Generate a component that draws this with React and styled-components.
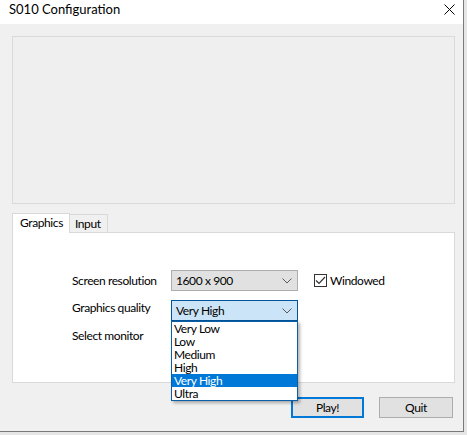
import styled, { createGlobalStyle } from "styled-components";

const Global = createGlobalStyle`
  body {
    margin: 0;
    background: #e6e6e6;
    font-family: Lato, "Noto Sans", sans-serif;
  }
`;

const Window = styled.div`
  width: 463px;
  height: 431px;
  border-right: 1px solid #7a7a7a;
  border-bottom: 1px solid #7a7a7a;
  background: #f0f0f0;
  display: flex;
  flex-direction: column;
  letter-spacing: -0.4px;
`;

const TitleBar = styled.div`
  height: 24px;
  background: #fff;
  display: flex;
  align-items: flex-start;
  justify-content: space-between;
  padding: 0 8px 0 9px;
`;

const Title = styled.span`
  font-size: 13px;
  line-height: 19px;
  letter-spacing: 0;
  color: #000;
`;

const Close = styled.svg`
  margin-top: 4px;
`;

const Body = styled.div`
  flex: 1;
  display: flex;
  flex-direction: column;
  padding: 12px 8px 0 12px;
`;

const Preview = styled.div`
  height: 166px;
  border: 1px solid #dadada;
  background: #efefef;
`;

const TabStrip = styled.div`
  display: flex;
  align-items: flex-end;
  height: 20px;
  margin-top: 8px;
`;

const Tab = styled.div`
  height: ${(p) => (p.$active ? 20 : 18)}px;
  padding: ${(p) => (p.$active ? "0 6px 0 7px" : "0 6px 0 5px")};
  box-sizing: border-box;
  border: 1px solid #d9d9d9;
  border-bottom: none;
  background: ${(p) => (p.$active ? "#fff" : "#f0f0f0")};
  font-size: 12px;
  line-height: 18px;
  color: #000;
  position: relative;
  z-index: ${(p) => (p.$active ? 1 : 0)};
  margin-bottom: ${(p) => (p.$active ? -1 : 0)}px;
  ${(p) => (p.$active ? "" : "border-left: none;")}
`;

const Panel = styled.div`
  border: 1px solid #d9d9d9;
  background: #fff;
  padding: 37px 0 0 59px;
  box-sizing: border-box;
  height: 151px;
  display: grid;
  grid-template-columns: 99px 127px auto;
  grid-auto-rows: 21px;
  row-gap: 9px;
  align-content: start;
`;

const Label = styled.div`
  font-size: 12px;
  line-height: 21px;
  color: #000;
  transform: translateY(${(p) => p.$shift || 0}px);
`;

const Combo = styled.div`
  position: relative;
  box-sizing: border-box;
  height: 21px;
  border: 1px solid ${(p) => (p.$open ? "#005499" : "#adadad")};
  background: ${(p) => (p.$open ? "#cce4f7" : "#e1e1e1")};
  display: flex;
  align-items: center;
  justify-content: space-between;
  padding: 0 5px 0 4px;
  font-size: 12px;
  color: #000;
  z-index: ${(p) => (p.$open ? 5 : 0)};
`;

const List = styled.div`
  position: absolute;
  left: -1px;
  right: -1px;
  top: 20px;
  border: 1px solid #0b5ea8;
  background: #fff;
  box-shadow: 2px 2px 3px rgba(0, 0, 0, 0.3);
`;

const Item = styled.div`
  height: 13px;
  line-height: 13px;
  padding-left: 2px;
  font-size: 12px;
  background: ${(p) => (p.$sel ? "#0078d7" : "transparent")};
  color: ${(p) => (p.$sel ? "#fff" : "#000")};
`;

const Check = styled.label`
  display: flex;
  align-items: center;
  gap: 3px;
  margin-left: 16px;
  font-size: 12px;
  color: #000;
  height: 21px;
`;

const Box = styled.span`
  width: 13px;
  height: 13px;
  box-sizing: border-box;
  border: 1px solid #333;
  background: #fff;
  display: flex;
  align-items: center;
  justify-content: center;
`;

const Footer = styled.div`
  display: flex;
  justify-content: flex-end;
  gap: 15px;
  padding: 14px 2px 0 0;
`;

const Button = styled.button`
  width: ${(p) => p.$w}px;
  height: 21px;
  box-sizing: border-box;
  border: ${(p) => (p.$default ? "2px solid #0078d7" : "1px solid #adadad")};
  background: #e1e1e1;
  font-family: inherit;
  font-size: 12px;
  letter-spacing: inherit;
  color: #000;
  padding: 0;
`;

const Chevron = () => (
  <svg width="10" height="6" viewBox="0 0 10 6">
    <polyline points="0.5,0.5 5,5 9.5,0.5" fill="none" stroke="#5a5a5a" strokeWidth="1" />
  </svg>
);

const qualities = ["Very Low", "Low", "Medium", "High", "Very High", "Ultra"];

export default function App() {
  return (
    <>
      <Global />
      <Window>
        <TitleBar>
          <Title>S010 Configuration</Title>
          <Close width="11" height="11" viewBox="0 0 11 11">
            <path d="M0.5 0.5 L10.5 10.5 M10.5 0.5 L0.5 10.5" stroke="#000" strokeWidth="1" />
          </Close>
        </TitleBar>
        <Body>
          <Preview />
          <TabStrip>
            <Tab $active>Graphics</Tab>
            <Tab>Input</Tab>
          </TabStrip>
          <Panel>
            <Label>Screen resolution</Label>
            <Combo>
              1600 x 900
              <Chevron />
            </Combo>
            <Check>
              <Box>
                <svg width="11" height="11" viewBox="0 0 11 11">
                  <polyline points="1,5.5 4,8.5 10,2" fill="none" stroke="#333" strokeWidth="1.2" />
                </svg>
              </Box>
              Windowed
            </Check>
            <Label $shift={-3}>Graphics quality</Label>
            <Combo $open>
              Very High
              <Chevron />
              <List>
                {qualities.map((q) => (
                  <Item key={q} $sel={q === "Very High"}>
                    {q}
                  </Item>
                ))}
              </List>
            </Combo>
            <span />
            <Label $shift={-5}>Select monitor</Label>
            <Combo>
              <Chevron />
            </Combo>
          </Panel>
          <Footer>
            <Button $default $w={73}>Play!</Button>
            <Button $w={74}>Quit</Button>
          </Footer>
        </Body>
      </Window>
    </>
  );
}
